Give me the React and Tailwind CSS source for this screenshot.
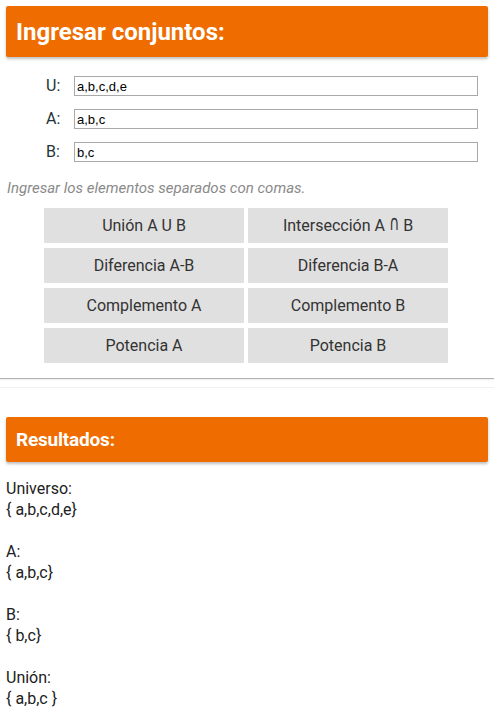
import React from "react";

const Cap = () => (
  <span
    className="inline-block text-[14px] leading-none scale-y-[1.5] origin-bottom"
    style={{ fontFamily: "'DejaVu Sans', sans-serif" }}
  >
    ∩
  </span>
);

const buttons = [
  "Unión A U B",
  "INTER",
  "Diferencia A-B",
  "Diferencia B-A",
  "Complemento A",
  "Complemento B",
  "Potencia A",
  "Potencia B",
];

const fields = [
  ["U:", "a,b,c,d,e"],
  ["A:", "a,b,c"],
  ["B:", "b,c"],
];

const results = [
  ["Universo:", "{ a,b,c,d,e}"],
  ["A:", "{ a,b,c}"],
  ["B:", "{ b,c}"],
  ["Unión:", "{ a,b,c }"],
];

export default function App() {
  return (
    <div
      className="w-[494px] min-h-[715px] bg-white text-[#212121]"
      style={{ fontFamily: "Roboto, 'Liberation Sans', sans-serif" }}
    >
      <div className="px-[6px] pt-[6px]">
        <div className="h-[51px] bg-[#ef6c00] rounded-[2px] shadow-[0_2px_3px_rgba(0,0,0,0.25)] flex items-center pl-[10px]">
          <h1 className="text-white text-[24px] font-bold leading-none">
            Ingresar conjuntos:
          </h1>
        </div>
      </div>

      <div className="mt-[19px] pl-[46px] pr-[16px] flex flex-col gap-[13px]">
        {fields.map(([label, value]) => (
          <div key={label} className="flex items-center h-[20px]">
            <span className="w-[28px] text-[16px] text-[#263238] leading-none">{label}</span>
            <input
              readOnly
              value={value}
              className="flex-1 h-[20px] border border-[#a9a9a9] px-[2px] text-[13px] text-black outline-none"
              style={{ fontFamily: "'Liberation Sans', Arial, sans-serif" }}
            />
          </div>
        ))}
      </div>

      <p className="mt-[17px] pl-[7px] text-[15px] italic text-[#8a8a8a] leading-[18px]">
        Ingresar los elementos separados con comas.
      </p>

      <div className="mt-[11px] pl-[44px] grid grid-cols-[200px_200px] gap-x-[4px] gap-y-[5px]">
        {buttons.map((b) => (
          <button
            key={b}
            className="h-[35px] bg-[#e0e0e0] text-[16px] text-[#333] flex items-center justify-center"
          >
            {b === "INTER" ? (
              <span>
                Intersección A <Cap /> B
              </span>
            ) : (
              b
            )}
          </button>
        ))}
      </div>

      <div className="mt-[15px] h-px bg-[#b4b4b4] shadow-[0_1px_1px_rgba(0,0,0,0.08)]" />
      <div className="mt-[8px] h-px bg-[#f0f0f0]" />

      <div className="px-[6px] mt-[29px]">
        <div className="h-[45px] bg-[#ef6c00] rounded-[2px] shadow-[0_2px_3px_rgba(0,0,0,0.25)] flex items-center pl-[10px]">
          <h2 className="text-white text-[19px] font-bold leading-none tracking-[-0.2px]">
            Resultados:
          </h2>
        </div>
      </div>

      <div className="mt-[16px] pl-[6px] text-[16px] leading-[21px] text-[#212121] flex flex-col gap-[21px]">
        {results.map(([t, v]) => (
          <div key={t}>
            <div>{t}</div>
            <div>{v}</div>
          </div>
        ))}
      </div>
    </div>
  );
}
